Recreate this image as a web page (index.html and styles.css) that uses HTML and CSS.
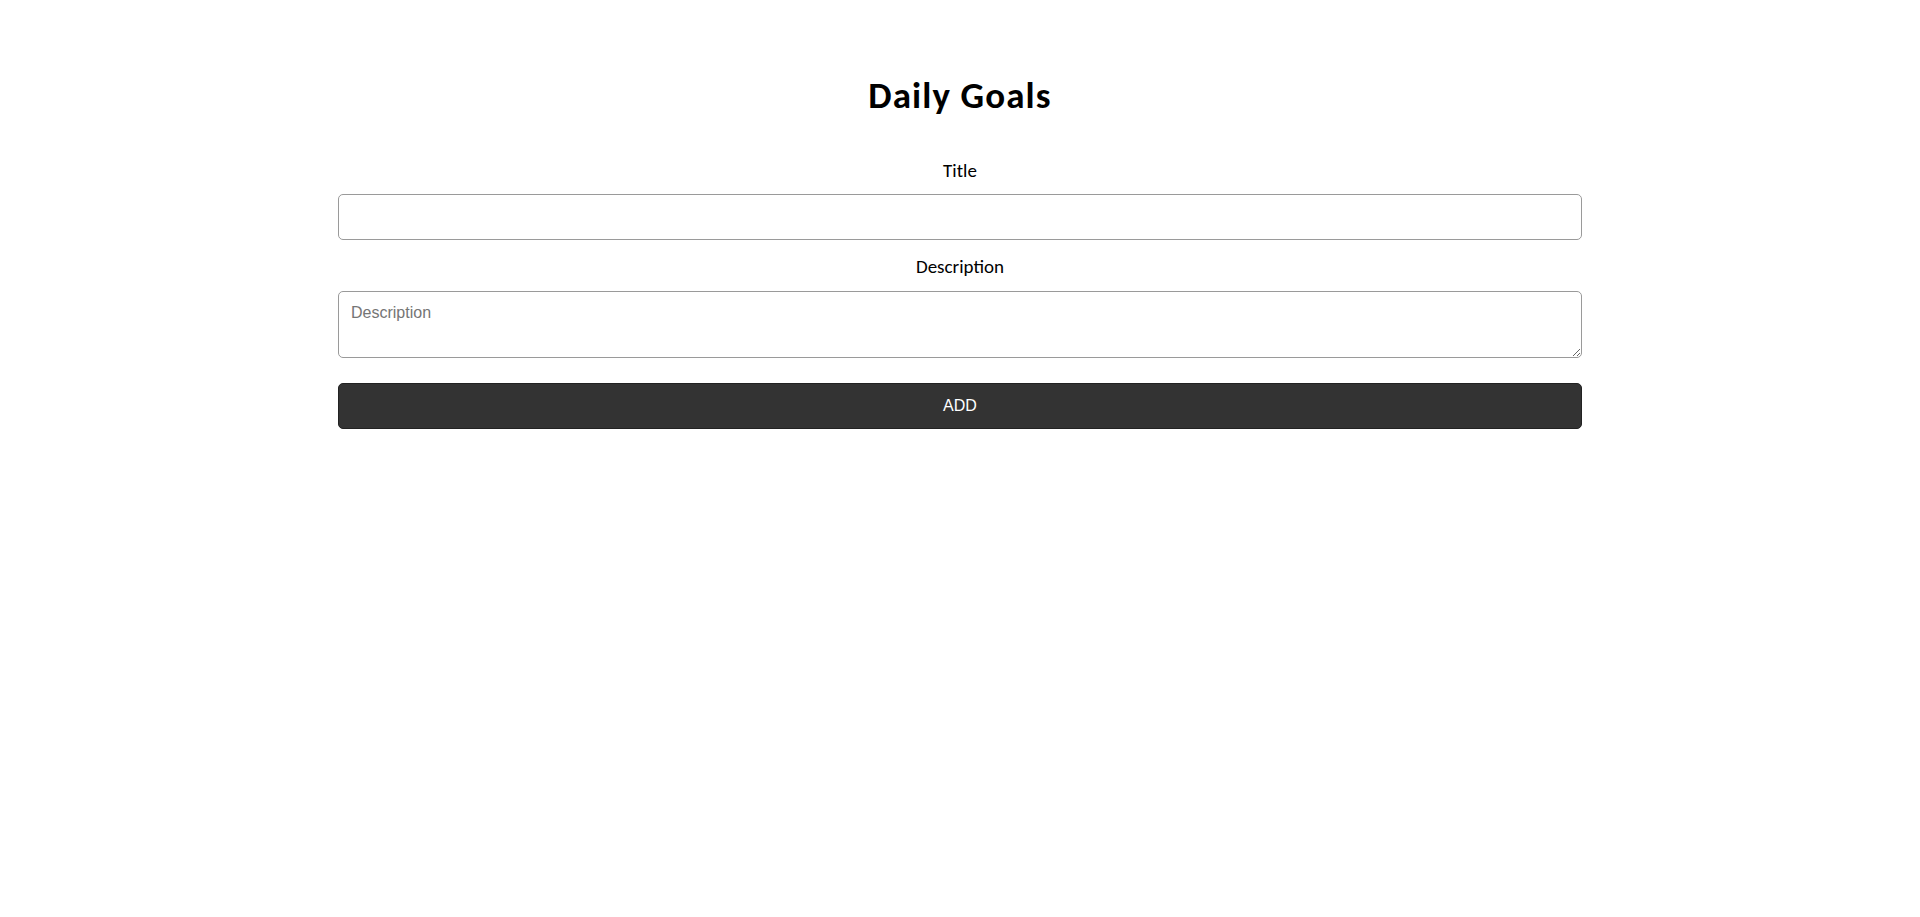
FILE: index.html
```html
<!DOCTYPE html>
<html lang="en">
<head>
<meta charset="utf-8">
<title>Daily Goals</title>
<link rel="stylesheet" href="styles.css">
</head>
<body>
<main class="app">
  <h1 class="app-title">Daily Goals</h1>
  <form class="goal-form">
    <label class="field-label" for="title">Title</label>
    <input class="field-input" id="title" type="text">
    <label class="field-label field-label--second" for="desc">Description</label>
    <textarea class="field-textarea" id="desc" placeholder="Description"></textarea>
    <button class="add-btn" type="button">ADD</button>
  </form>
</main>
</body>
</html>
```

FILE: styles.css
```css
html, body {
  margin: 0;
  padding: 0;
  background: #fff;
}

body {
  font-family: Calibri, Lato, "Liberation Sans", sans-serif;
  color: #000;
}

.app {
  width: 1244px;
  margin: 0 auto;
  padding-top: 72px;
}

.app-title {
  margin: 0;
  font-size: 37px;
  line-height: 48px;
  font-weight: 700;
  letter-spacing: 1.1px;
  text-align: center;
}

.goal-form {
  display: flex;
  flex-direction: column;
  margin-top: 39px;
}

.field-label {
  display: block;
  text-align: center;
  font-size: 19px;
  line-height: 24px;
  font-weight: 400;
  margin-bottom: 11px;
}

.field-label--second {
  margin-top: 15px;
  margin-bottom: 12px;
}

.field-input,
.field-textarea {
  box-sizing: border-box;
  width: 100%;
  border: 1px solid #9a9a9a;
  border-radius: 5px;
  padding: 12px;
  font-family: "Liberation Sans", Arial, sans-serif;
  font-size: 16px;
  line-height: 18px;
  color: #000;
  background: #fff;
  outline: none;
}

.field-input {
  height: 46px;
}

.field-textarea {
  height: 67px;
  resize: vertical;
  display: block;
}

.field-textarea::placeholder {
  color: #757575;
}

.add-btn {
  box-sizing: border-box;
  margin-top: 25px;
  height: 46px;
  width: 100%;
  background: #333;
  color: #fff;
  border: 1px solid #222;
  border-radius: 5px;
  font-family: "Liberation Sans", Arial, sans-serif;
  font-size: 16px;
  cursor: pointer;
}
```
